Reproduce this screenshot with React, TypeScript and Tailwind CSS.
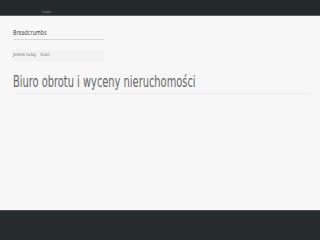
import React from "react";

export default function App() {
  const font = { fontFamily: '"DejaVu Sans Condensed", "Liberation Sans", sans-serif' };
  return (
    <div className="w-[320px] h-[240px] flex flex-col bg-[#f7f7f7] overflow-hidden" style={font}>
      <header className="h-[16px] bg-[#252b2b] border-b border-[#5a5f5f] flex items-end shrink-0">
        <span className="ml-[42px] text-[4px] leading-[5px] text-[#8a8f8f] mb-[1px]">Logo</span>
      </header>
      <div className="h-[194px] shrink-0 px-[13px] pt-[13px]">
        <div className="w-[91px] border-b border-[#d8d8d8] pb-[2px]">
          <div className="text-[7px] leading-[8px] text-[#444] origin-left scale-x-[0.8] whitespace-nowrap">Breadcrumbs</div>
        </div>
        <div className="mt-[10px] w-[92px] h-[11px] -ml-[1px] pl-[1px] bg-[#f2f2f2] flex items-center">
          <span className="text-[4.5px] text-[#777] whitespace-nowrap">Jesteś tutaj:</span>
          <span className="text-[4.5px] text-[#777] ml-[3px]">Start</span>
        </div>
        <div className="mt-[12px] border-b border-[#ececec] pb-[2px] -mr-[4px]">
          <h1 className="text-[16px] leading-[18px] text-[#666] font-normal origin-left scale-x-[0.685] whitespace-nowrap">Biuro obrotu i wyceny nieruchomości</h1>
        </div>
      </div>
      <footer className="flex-1 bg-[#262b2b] border-t border-[#4a4f4f]" />
    </div>
  );
}
